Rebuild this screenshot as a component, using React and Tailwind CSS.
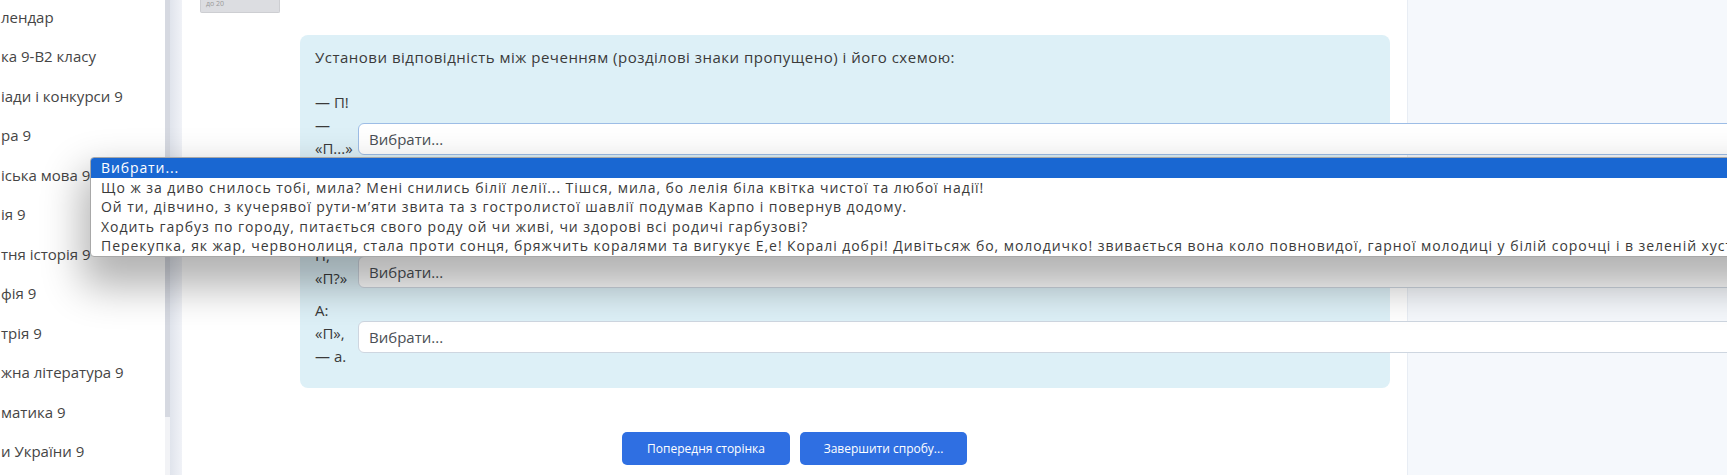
const navItems = [
  "лендар",
  "ка 9-В2 класу",
  "іади і конкурси 9",
  "ра 9",
  "іська мова 9",
  "ія 9",
  "тня історія 9",
  "фія 9",
  "трія 9",
  "жна література 9",
  "матика 9",
  "и України 9",
];

const options = [
  "Що ж за диво снилось тобі, мила? Мені снились білії лелії... Тішся, мила, бо лелія біла квітка чистої та любої надії!",
  "Ой ти, дівчино, з кучерявої рути-м’яти звита та з гостролистої шавлії подумав Карпо і повернув додому.",
  "Ходить гарбуз по городу, питається свого роду ой чи живі, чи здорові всі родичі гарбузові?",
  "Перекупка, як жар, червонолиця, стала проти сонця, бряжчить коралями та вигукує Е,е! Коралі добрі! Дивітьсяж бо, молодичко! звивається вона коло повновидої, гарної молодиці у білій сорочці і в зеленій хустці",
];

function Select({ focused, className }) {
  return (
    <div
      className={
        "h-[32px] w-[1500px] shrink-0 rounded-md border bg-white pl-[10px] text-[15px] leading-[30px] text-[#4a4f55] " +
        (focused ? "border-[#9dbde6]" : "border-[#ced6e0]") +
        " " +
        className
      }
    >
      Вибрати...
    </div>
  );
}

export default function App() {
  return (
    <div className="relative flex h-[475px] w-full overflow-hidden bg-white font-['Open_Sans',sans-serif] text-[#3a3a3a]">
      {/* Sidebar */}
      <div className="w-[165px] shrink-0 overflow-hidden">
        <div className="-mt-[3px]">
          {navItems.map((item) => (
            <div
              key={item}
              className="flex h-[39.5px] items-center whitespace-nowrap pl-[1px] text-[15px] text-[#454545]"
            >
              {item}
            </div>
          ))}
        </div>
      </div>

      {/* Sidebar scrollbar */}
      <div className="flex w-[17px] shrink-0">
        <div className="flex w-[5px] flex-col">
          <div className="h-[417px] bg-[#d6d9e1]" />
          <div className="flex-1 bg-[#f2f3f6]" />
        </div>
        <div className="w-[12px] bg-gradient-to-r from-[#e0e4ec] to-[#f0f2f7]" />
      </div>

      {/* Main */}
      <div className="relative z-10 w-[1225px] shrink-0 bg-white">
        <div className="ml-[18px] h-[13px] w-[80px] rounded-b-[2px] border border-t-0 border-[#cdced2] bg-[#dcdde1] pl-[5px] text-[7px] leading-[8px] text-[#9a9a9a]">
          до 20
        </div>

        <div className="ml-[118px] mt-[22px] w-[1090px] rounded-lg bg-[#ddf0f7] pb-[20px] pl-[15px] pt-[11px] text-[15px] leading-[23px]">
          <p className="tracking-[0.5px]">
            Установи відповідність між реченням (розділові знаки пропущено) і його схемою:
          </p>

          <div className="mt-[22px] flex items-start">
            <div className="w-[43px] shrink-0">
              <div>— П!</div>
              <div>—</div>
              <div>«П...»</div>
              <div>— а.</div>
            </div>
            <Select focused className="mt-[32px]" />
          </div>

          <div className="mt-[61px] flex items-start">
            <div className="w-[43px] shrink-0">
              <div>П,</div>
              <div>«П?»</div>
            </div>
            <Select className="mt-[12px]" />
          </div>

          <div className="mt-[9px] flex items-start">
            <div className="w-[43px] shrink-0">
              <div>А:</div>
              <div>«П»,</div>
              <div>— а.</div>
            </div>
            <Select className="mt-[22px]" />
          </div>
        </div>

        <div className="mt-[44px] flex justify-center gap-[10px]">
          <button className="h-[33px] w-[168px] rounded-[5px] bg-[#2f6fe2] text-[12px] text-white">
            Попередня сторінка
          </button>
          <button className="h-[33px] w-[167px] rounded-[5px] bg-[#2f6fe2] text-[12px] text-white">
            Завершити спробу...
          </button>
        </div>
      </div>

      {/* Right panel */}
      <div className="flex-1 border-l border-[#e8edf4] bg-[#f5f8fc]" />

      {/* Open select listbox */}
      <div className="absolute left-[90px] top-[157px] z-20 w-[1700px] overflow-hidden rounded-[4px] border border-[#a8a8a8] bg-white shadow-[0_22px_40px_8px_rgba(0,0,0,0.3)]">
        <div className="h-[19.5px] whitespace-nowrap bg-[#1967d2] pl-[10px] text-[14px] leading-[19.5px] tracking-[0.9px] text-white">
          Вибрати...
        </div>
        {options.map((o) => (
          <div
            key={o}
            className="h-[19.5px] whitespace-nowrap pl-[10px] text-[14px] leading-[19.5px] tracking-[0.95px] text-[#3a3a3a]"
          >
            {o}
          </div>
        ))}
      </div>
    </div>
  );
}
